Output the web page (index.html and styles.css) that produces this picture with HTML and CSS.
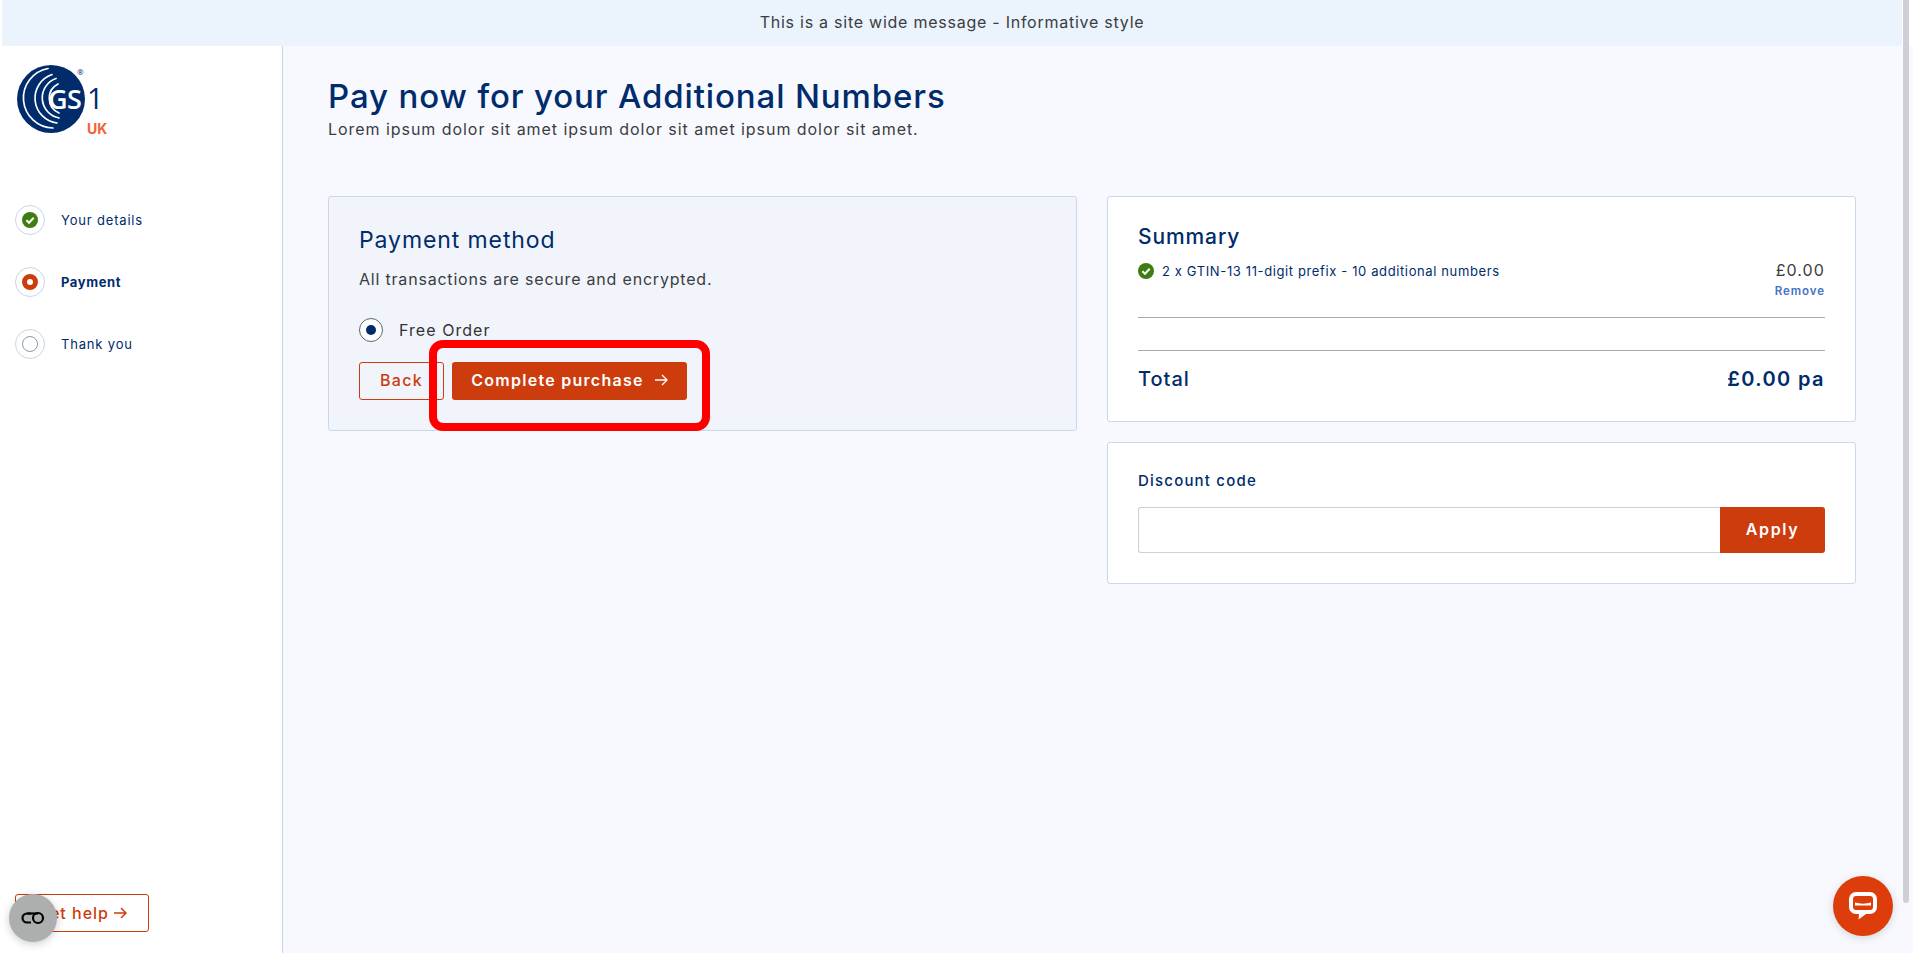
FILE: index.html
```html
<!DOCTYPE html>
<html lang="en">
<head>
<meta charset="utf-8">
<title>Pay now for your Additional Numbers</title>
<link rel="stylesheet" href="styles.css">
</head>
<body>
<div class="app">
  <div class="banner">This is a site wide message - Informative style</div>
  <div class="shell">
    <aside class="sidebar">
      <svg class="logo" width="100" height="80" viewBox="0 0 100 80" role="img" aria-label="GS1 UK">
        <circle cx="34" cy="34" r="34" fill="#002c6c"/>
        <g fill="none" stroke="#fff" stroke-linecap="round" stroke-width="1.7">
          <path d="M31 3.5 A30 30 0 0 0 36 63"/>
          <path d="M35 9.5 A25 25 0 0 0 40 58"/>
          <path d="M39 13.5 A20.5 20.5 0 0 0 42 53"/>
          <path d="M41 19 A16 16 0 0 0 42 48"/>
        </g>
        <text class="logo-gs" x="31" y="44">GS</text>
        <text class="logo-one" x="70" y="44">1</text>
        <text class="logo-reg" x="60" y="10">®</text>
        <text class="logo-uk" x="70" y="69">UK</text>
      </svg>
      <ol class="steps">
        <li class="step">
          <span class="step-ring">
            <svg width="16" height="16" viewBox="0 0 16 16"><circle cx="8" cy="8" r="8" fill="#3f7d13"/><path d="M4.4 8.3 7 10.8 11.7 5.8" fill="none" stroke="#fff" stroke-width="2"/></svg>
          </span>
          Your details
        </li>
        <li class="step step-active">
          <span class="step-ring"><span class="dot-current"></span></span>
          Payment
        </li>
        <li class="step">
          <span class="step-ring"><span class="dot-empty"></span></span>
          Thank you
        </li>
      </ol>
      <a class="help">Get help
        <svg width="14" height="12" viewBox="0 0 14 12"><path d="M1 6H12.5M8 1 13 6 8 11" fill="none" stroke="#cd3c0d" stroke-width="1.5"/></svg>
      </a>
    </aside>
    <main class="main">
      <h1 class="title">Pay now for your Additional Numbers</h1>
      <p class="lead">Lorem ipsum dolor sit amet ipsum dolor sit amet ipsum dolor sit amet.</p>
      <div class="columns">
        <section class="card card-pay">
          <h2 class="pay-title">Payment method</h2>
          <p class="pay-note">All transactions are secure and encrypted.</p>
          <div class="radio-row">
            <span class="radio"><span class="radio-dot"></span></span>
            <span>Free Order</span>
          </div>
          <div class="actions">
            <button class="btn btn-outline">Back</button>
            <button class="btn btn-solid">Complete purchase
              <svg width="14" height="12" viewBox="0 0 14 12"><path d="M1 6H12.5M8 1 13 6 8 11" fill="none" stroke="#fff" stroke-width="1.3"/></svg>
            </button>
            <span class="annotation"></span>
          </div>
        </section>
        <div class="side">
          <section class="card card-summary">
            <h2 class="sum-title">Summary</h2>
            <div class="item">
              <svg width="16" height="16" viewBox="0 0 16 16"><circle cx="8" cy="8" r="8" fill="#3f7d13"/><path d="M4.4 8.3 7 10.8 11.7 5.8" fill="none" stroke="#fff" stroke-width="2"/></svg>
              <span class="item-name">2 x GTIN-13 11-digit prefix - 10 additional numbers</span>
              <div class="item-right">
                <div class="price">£0.00</div>
                <a class="remove">Remove</a>
              </div>
            </div>
            <div class="spacer-row"></div>
            <div class="total"><span>Total</span><span class="total-value">£0.00 pa</span></div>
          </section>
          <section class="card card-discount">
            <label class="discount-label">Discount code</label>
            <div class="discount-row">
              <input class="discount-input" type="text">
              <button class="apply">Apply</button>
            </div>
          </section>
        </div>
      </div>
    </main>
  </div>
</div>
<div class="scrollbar"></div>
<div class="cookie">
  <svg width="26" height="14" viewBox="0 0 26 14"><path d="M11 2.5H7a4.5 4.5 0 0 0 0 9h4" fill="none" stroke="#000" stroke-width="2.2"/><circle cx="18" cy="7" r="5" fill="none" stroke="#000" stroke-width="2.2"/><path d="M7 2.5h11" stroke="#000" stroke-width="2.2"/></svg>
</div>
<div class="chat">
  <svg width="28" height="28" viewBox="0 0 28 28"><path d="M7 0h14a7 7 0 0 1 7 7v8a7 7 0 0 1-7 7h-4l-7.500 5.500 .5-5.500H7a7 7 0 0 1-7-7V7a7 7 0 0 1 7-7z" fill="#fff"/><rect x="4" y="4" width="20" height="14" rx="3" fill="#dd3c0b"/><path d="M6 10.500c5 1.500 11 1.500 16 0v3H6z" fill="#fff"/></svg>
</div>
</body>
</html>
```
FILE: styles.css
```css
* { box-sizing: border-box; }
html, body { margin: 0; height: 100%; overflow: hidden; background: #fff; }
body { font-family: Inter, "Liberation Sans", sans-serif; color: #333; }
h1, h2, p, ol { margin: 0; padding: 0; }
.app { height: 953px; display: flex; flex-direction: column; padding-left: 2px; }
.banner { width: 1900px; height: 46px; flex: none; background: #ebf3fd; display: flex; align-items: center; justify-content: center; padding-bottom: 2px; font-size: 16px; letter-spacing: 0.75px; color: #3a3d42; }
.shell { flex: 1; display: flex; min-height: 0; }
.sidebar { width: 281px; flex: none; background: #fff; border-right: 1px solid #c7d6e9; display: flex; flex-direction: column; padding: 19px 0 21px 13px; }
.logo { display: block; margin-left: 2px; flex: none; }
.logo-gs { font: 600 27px "Open Sans", sans-serif; fill: #fff; letter-spacing: -0.5px; }
.logo-one { font: 400 29px "Open Sans", sans-serif; fill: #002c6c; }
.logo-reg { font: 400 8px "Open Sans", sans-serif; fill: #002c6c; }
.logo-uk { font: 700 14px Inter, sans-serif; fill: #f26334; }
.steps { list-style: none; margin-top: 60px; display: flex; flex-direction: column; gap: 32px; }
.step { height: 30px; display: flex; align-items: center; gap: 16px; font-size: 13px; letter-spacing: 0.82px; color: #002c6c; padding-bottom: 1px; }
.step-active { font-weight: 700; letter-spacing: 0.6px; }
.step-ring { width: 30px; height: 30px; border-radius: 50%; border: 1px solid #c7d6e9; display: flex; align-items: center; justify-content: center; flex: none; }
.dot-current { width: 16px; height: 16px; border-radius: 50%; border: 5px solid #cd3c0d; background: #fff; }
.dot-empty { width: 16px; height: 16px; border-radius: 50%; border: 1px solid #8d99a8; background: #fff; }
.help { margin-top: auto; width: 134px; height: 38px; border: 1px solid #cd3c0d; border-radius: 3px; color: #cd3c0d; font-size: 16px; font-weight: 500; letter-spacing: 1px; display: flex; align-items: center; justify-content: center; gap: 4px; }
.main { flex: 1; background: #f8f9fe; padding: 31px 58px 0 45px; min-width: 0; }
.title { font-size: 33px; line-height: 38px; font-weight: 500; letter-spacing: 0.87px; color: #002c6c; }
.lead { font-size: 16px; line-height: 22px; letter-spacing: 0.95px; color: #3a3d42; margin-top: 3px; }
.columns { display: grid; grid-template-columns: 749px 749px; gap: 30px; margin-top: 56px; align-items: start; }
.card { border: 1px solid #c9d8ea; border-radius: 3px; background: #fff; }
.card-pay { height: 235px; background: #f1f5fb; padding: 29px 30px 0; }
.pay-title { font-size: 23px; line-height: 28px; font-weight: 400; letter-spacing: 0.9px; color: #002c6c; }
.pay-note { font-size: 16px; line-height: 22px; letter-spacing: 0.8px; color: #3a3d42; margin-top: 14px; }
.radio-row { display: flex; align-items: center; gap: 16px; margin-top: 28px; font-size: 16px; letter-spacing: 1.05px; color: #333; }
.radio { width: 24px; height: 24px; border-radius: 50%; border: 1px solid #5b6470; background: #fff; display: flex; align-items: center; justify-content: center; }
.radio-dot { width: 10px; height: 10px; border-radius: 50%; background: #002c6c; }
.actions { position: relative; display: flex; gap: 8px; margin-top: 20px; }
.btn { height: 38px; border-radius: 3px; font: 600 16px Inter, sans-serif; letter-spacing: 1.28px; display: flex; align-items: center; justify-content: center; gap: 10px; padding: 0 0 2px; cursor: pointer; }
.btn-outline { width: 85px; border: 1px solid #cd3c0d; background: transparent; color: #cd3c0d; font-weight: 500; }
.btn-solid { width: 235px; border: 0; background: #cd3c0d; color: #fff; }
.annotation { position: absolute; left: 70px; top: -22px; width: 281px; height: 91px; border: 8px solid #fe0000; border-radius: 14px; pointer-events: none; }
.side { display: flex; flex-direction: column; gap: 20px; }
.card-summary { height: 226px; padding: 26px 30px 0; }
.sum-title { font-size: 21px; line-height: 28px; font-weight: 500; letter-spacing: 0.9px; color: #002c6c; }
.item { display: flex; align-items: flex-start; gap: 8px; margin-top: 3px; height: 63px; }
.item svg { margin-top: 9px; flex: none; }
.item-name { font-size: 13px; line-height: 34px; letter-spacing: 0.62px; color: #002c6c; flex: 1; }
.item-right { text-align: right; padding-top: 5px; }
.price { font-size: 16px; line-height: 22px; color: #3a3d42; letter-spacing: 1.1px; }
.remove { display: block; font-size: 11.5px; line-height: 16px; font-weight: 600; color: #4472c4; letter-spacing: 0.95px; margin-top: 2px; }
.spacer-row { height: 34px; border-top: 1px solid #a6adb6; border-bottom: 1px solid #a6adb6; }
.total { display: flex; justify-content: space-between; align-items: center; height: 46px; margin-top: 5px; font-size: 20px; font-weight: 500; letter-spacing: 1px; color: #002c6c; }
.total-value { font-weight: 600; letter-spacing: 1.4px; }
.card-discount { height: 142px; padding: 28px 30px 0; }
.discount-label { display: block; font-size: 15px; line-height: 20px; font-weight: 500; letter-spacing: 1.2px; color: #002c6c; }
.discount-row { display: flex; margin-top: 16px; height: 46px; }
.discount-input { flex: 1; min-width: 0; border: 1px solid #c9d1db; border-right: 0; border-radius: 3px 0 0 3px; background: #fff; outline: 0; }
.apply { width: 105px; border: 0; border-radius: 0 3px 3px 0; background: #cd3c0d; color: #fff; font: 600 16px Inter, sans-serif; letter-spacing: 1.6px; padding: 0 0 2px; }
.scrollbar { position: fixed; left: 1903px; top: 0; width: 6px; height: 903px; background: #cfcfd6; border-radius: 0 0 3px 3px; }
.cookie { position: fixed; left: 9px; top: 894px; width: 48px; height: 48px; border-radius: 50%; background: #adaeae; box-shadow: 0 2px 8px rgba(0,0,0,.2); display: flex; align-items: center; justify-content: center; }
.chat { position: fixed; left: 1833px; top: 876px; width: 60px; height: 60px; border-radius: 50%; background: #dd3c0b; box-shadow: 0 2px 8px rgba(0,0,0,.15); display: flex; align-items: center; justify-content: center; }
```
